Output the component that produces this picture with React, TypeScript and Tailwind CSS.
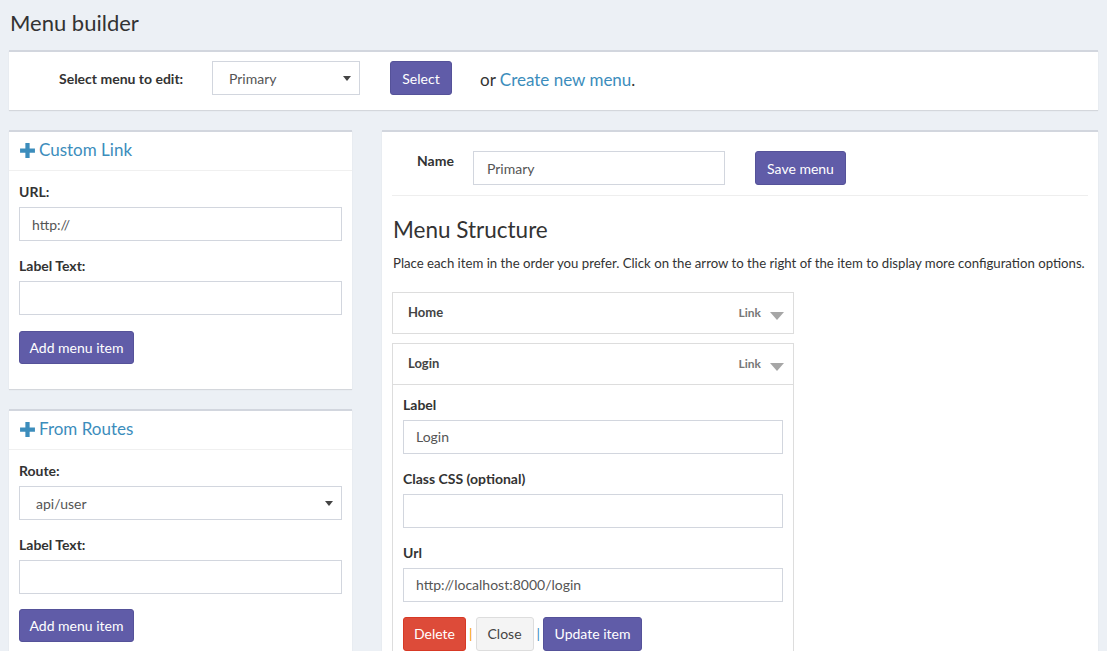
import React from "react";

const F = { fontFamily: "Lato, 'Open Sans', sans-serif" };

function Plus() {
  return (
    <svg width="17" height="17" viewBox="0 0 16 16" className="inline-block">
      <path d="M6 1h4v5h5v4h-5v5H6v-5H1V6h5z" fill="#3c8dbc" />
    </svg>
  );
}

function Caret() {
  return (
    <svg width="8" height="5" viewBox="0 0 8 5">
      <path d="M0 0h8L4 5z" fill="#444" />
    </svg>
  );
}

function Input({ value, className = "" }: { value?: string; className?: string }) {
  return (
    <div className={`h-[34px] border border-[#d2d6de] bg-white flex items-center px-3 text-[14px] text-[#555] ${className}`}>
      {value}
    </div>
  );
}

function Select({ value, className = "" }: { value: string; className?: string }) {
  return (
    <div className={`h-[34px] border border-[#d2d6de] bg-white flex items-center justify-between pl-4 pr-2 text-[14px] text-[#555] ${className}`}>
      <span>{value}</span>
      <Caret />
    </div>
  );
}

function PurpleBtn({ children, className = "" }: { children: React.ReactNode; className?: string }) {
  return (
    <div className={`bg-[#605ca8] border border-[#555299] text-white rounded-[3px] flex items-center justify-center text-[14px] ${className}`}>
      {children}
    </div>
  );
}

function SideBox({ title, children }: { title: string; children: React.ReactNode }) {
  return (
    <div className="bg-white border-t-2 border-[#d2d6de] shadow-[0_1px_1px_rgba(0,0,0,0.1)]">
      <div className="h-[39px] border-b border-[#f0f0f0] flex items-center pb-[2px] px-[10px] gap-[3px] text-[17px] text-[#3c8dbc]">
        <Plus />
        <span>{title}</span>
      </div>
      <div className="px-[10px] pt-[11px] pb-[25px]">{children}</div>
    </div>
  );
}

function Label({ children, className = "" }: { children: React.ReactNode; className?: string }) {
  return <div className={`text-[14px] leading-[20px] font-bold text-[#333] mb-[5px] ${className}`}>{children}</div>;
}

function Item({ name }: { name: string }) {
  return (
    <div className="h-[40px] flex items-center justify-between pl-[15px] pr-[9px]">
      <span className="text-[13px] font-bold text-[#444]">{name}</span>
      <span className="flex items-center gap-[9px]">
        <span className="text-[12px] font-bold text-[#777]">Link</span>
        <svg width="14" height="8" viewBox="0 0 14 8" className="mt-[6px]">
          <path d="M0 0h14L7 8z" fill="#a6a6a6" />
        </svg>
      </span>
    </div>
  );
}

export default function App() {
  return (
    <div style={F} className="w-[1107px] h-[651px] overflow-hidden bg-[#ecf0f5] text-[#333]">
      <div className="h-[50px] flex items-center pl-[10px] pb-[6px] text-[22px] font-normal text-[#333]">Menu builder</div>
      <div className="mx-[9px] h-[60px] bg-white border-t-2 border-[#d2d6de] shadow-[0_1px_1px_rgba(0,0,0,0.1)] flex items-start pt-[9px]">
        <div className="ml-[50px] w-[153px] h-[34px] flex items-center text-[14px] font-bold text-[#333]">Select menu to edit:</div>
        <Select value="Primary" className="w-[148px]" />
        <PurpleBtn className="ml-[30px] w-[62px] h-[34px]">Select</PurpleBtn>
        <div className="ml-[28px] h-[34px] flex items-center pt-[4px] text-[17px] text-[#333]">
          <span>
            or <span className="text-[#3c8dbc]">Create new menu</span>.
          </span>
        </div>
      </div>

      <div className="flex gap-[30px] px-[9px] mt-[20px]">
        <div className="w-[343px] flex flex-col gap-[20px] shrink-0">
          <SideBox title="Custom Link">
            <Label>URL:</Label>
            <Input value="http://" />
            <Label className="mt-[15px]">Label Text:</Label>
            <Input />
            <PurpleBtn className="mt-[16px] w-[115px] h-[33px]">Add menu item</PurpleBtn>
          </SideBox>
          <SideBox title="From Routes">
            <Label>Route:</Label>
            <Select value="api/user" />
            <Label className="mt-[15px]">Label Text:</Label>
            <Input />
            <PurpleBtn className="mt-[15px] w-[115px] h-[33px]">Add menu item</PurpleBtn>
          </SideBox>
        </div>

        <div className="flex-1 bg-white border-t-2 border-[#d2d6de] shadow-[0_1px_1px_rgba(0,0,0,0.1)] px-[10px] h-[560px]">
          <div className="flex items-start pt-[19px] pb-[10px] border-b border-[#eee]">
            <div className="ml-[25px] w-[56px] text-[14px] leading-[20px] font-bold">Name</div>
            <Input value="Primary" className="w-[252px] pl-[13px]" />
            <PurpleBtn className="ml-[30px] w-[91px] h-[34px]">Save menu</PurpleBtn>
          </div>
          <div className="mt-[18px] text-[22.5px] leading-[32px] text-[#333] pl-[1px]">Menu Structure</div>
          <div className="mt-[8px] text-[13.2px] text-[#333] pl-[1px]">
            Place each item in the order you prefer. Click on the arrow to the right of the item to display more configuration options.
          </div>
          <div className="mt-[18px] w-[402px]">
            <div className="border border-[#ddd]">
              <Item name="Home" />
            </div>
            <div className="border border-[#ddd] mt-[9px]">
              <Item name="Login" />
              <div className="border-t border-[#ddd] px-[10px] pt-[10px] pb-[20px]">
                <Label>Label</Label>
                <Input value="Login" />
                <Label className="mt-[15px]">Class CSS (optional)</Label>
                <Input />
                <Label className="mt-[15px]">Url</Label>
                <Input value="http://localhost:8000/login" />
                <div className="mt-[15px] flex items-center">
                  <div className="w-[63px] h-[34px] rounded-[3px] bg-[#dd4b39] border border-[#d73925] text-white text-[14px] flex items-center justify-center">Delete</div>
                  <span className="mx-[3px] text-[#f39c12] text-[14px]">|</span>
                  <div className="w-[58px] h-[34px] rounded-[3px] bg-[#f4f4f4] border border-[#ddd] text-[#444] text-[14px] flex items-center justify-center">Close</div>
                  <span className="mx-[3px] text-[#3c8dbc] text-[14px]">|</span>
                  <PurpleBtn className="w-[99px] h-[34px]">Update item</PurpleBtn>
                </div>
              </div>
            </div>
          </div>
        </div>
      </div>
    </div>
  );
}
